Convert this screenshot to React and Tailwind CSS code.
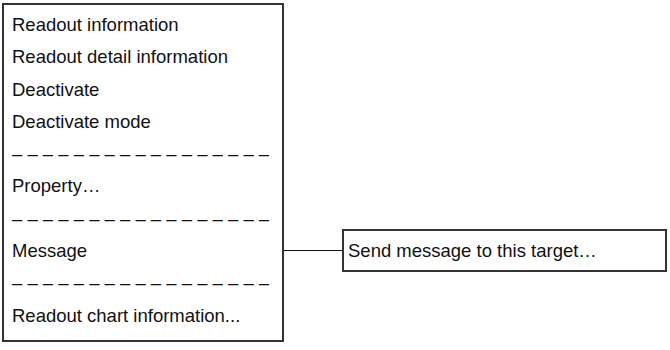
export default function App() {
  const dash = "– – – – – – – – – – – – – – – – –";
  const rows = [
    "Readout information",
    "Readout detail information",
    "Deactivate",
    "Deactivate mode",
    dash,
    "Property…",
    dash,
    "Message",
    dash,
    "Readout chart information...",
  ];
  return (
    <div
      className="w-[670px] h-[350px] bg-white flex items-start pt-[3px] pl-[2px] text-[#111]"
      style={{ fontFamily: '"Liberation Sans", Arial, sans-serif' }}
    >
      <div className="w-[282px] h-[339px] border-2 border-[#333] pl-[8px] pt-[4px] flex flex-col shrink-0">
        {rows.map((r, i) => (
          <div key={i} className="h-[32.3px] leading-[32.3px] text-[18.5px] whitespace-nowrap">
            {r}
          </div>
        ))}
      </div>
      <div className="mt-[226px] flex items-center">
        <div className="w-[58px] h-px bg-[#111]" />
        <div className="w-[325px] h-[43px] border-2 border-[#333] pl-[4px] flex items-center text-[18.5px] whitespace-nowrap">
          Send message to this target…
        </div>
      </div>
    </div>
  );
}
